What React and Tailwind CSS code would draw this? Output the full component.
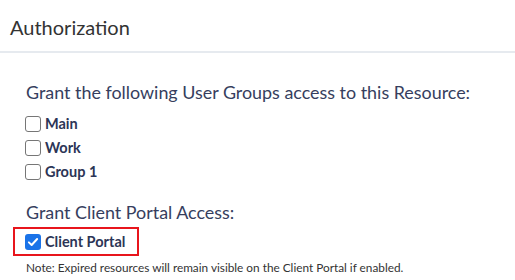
import React from 'react';

const Box = ({ checked }) =>
  checked ? (
    <span className="flex items-center justify-center w-[16px] h-[16px] rounded-[3px] bg-[#1a73e8]">
      <svg viewBox="0 0 16 16" className="w-[12px] h-[12px]" fill="none" stroke="white" strokeWidth="2.6" strokeLinecap="round" strokeLinejoin="round">
        <path d="M2.5 8.5 6.2 12 13.5 4" />
      </svg>
    </span>
  ) : (
    <span className="block w-[16px] h-[16px] rounded-[3px] border border-[#767676] bg-white" />
  );

const Option = ({ label, checked }) => (
  <label className="flex items-center gap-[4px] h-[24px]">
    <Box checked={checked} />
    <span className="text-[14.5px] font-bold text-[#2c3556]">{label}</span>
  </label>
);

export default function App() {
  const groups = ['Main', 'Work', 'Group 1'];

  return (
    <div className="w-[515px] h-[280px] bg-white overflow-hidden" style={{ fontFamily: 'Lato, "Noto Sans", sans-serif' }}>
      <div className="h-[53px] px-[10px] pt-[3px] flex items-center border-b-2 border-[#e6eaef]">
        <h2 className="text-[20px] text-[#333333]">Authorization</h2>
      </div>

      <div className="pl-[25px] pt-[25px]">
        <h3 className="text-[17.9px] text-[#363e5e] leading-[28px] pl-[1px]">Grant the following User Groups access to this Resource:</h3>
        <div className="flex flex-col pt-[6px]">
          {groups.map((g) => (
            <Option key={g} label={g} />
          ))}
        </div>

        <h3 className="text-[17.9px] text-[#363e5e] leading-[28px] pt-[14px] pl-[1px]">Grant Client Portal Access:</h3>
        <div className="-ml-[12px] mt-[1px] w-[126px] h-[29px] border-2 border-[#e8151c] pl-[10px] flex items-center">
          <Option label="Client Portal" checked />
        </div>
        <p className="text-[11.8px] text-[#333333] pt-[3px] pl-[1px]">Note: Expired resources will remain visible on the Client Portal if enabled.</p>
      </div>
    </div>
  );
}
